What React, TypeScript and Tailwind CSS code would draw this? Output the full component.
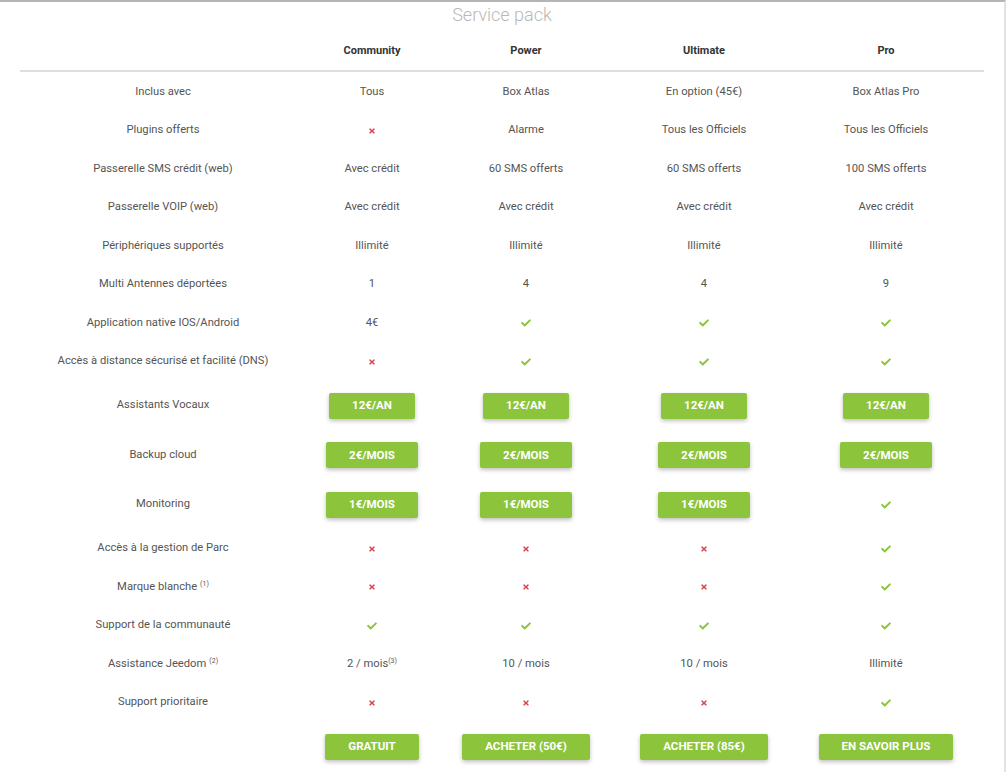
import React from "react";
import { FaCheck, FaTimes } from "react-icons/fa";

type Cell = string | { sup: string; text: string } | "yes" | "no" | { btn: string };

interface Row {
  label: string;
  labelSup?: string;
  cells: Cell[];
  tall?: boolean;
}

const plans = ["Community", "Power", "Ultimate", "Pro"];

const rows: Row[] = [
  { label: "Inclus avec", cells: ["Tous", "Box Atlas", "En option (45€)", "Box Atlas Pro"] },
  { label: "Plugins offerts", cells: ["no", "Alarme", "Tous les Officiels", "Tous les Officiels"] },
  { label: "Passerelle SMS crédit (web)", cells: ["Avec crédit", "60 SMS offerts", "60 SMS offerts", "100 SMS offerts"] },
  { label: "Passerelle VOIP (web)", cells: ["Avec crédit", "Avec crédit", "Avec crédit", "Avec crédit"] },
  { label: "Périphériques supportés", cells: ["Illimité", "Illimité", "Illimité", "Illimité"] },
  { label: "Multi Antennes déportées", cells: ["1", "4", "4", "9"] },
  { label: "Application native IOS/Android", cells: ["4€", "yes", "yes", "yes"] },
  { label: "Accès à distance sécurisé et facilité (DNS)", cells: ["no", "yes", "yes", "yes"] },
  {
    label: "Assistants Vocaux",
    tall: true,
    cells: [{ btn: "12€/AN" }, { btn: "12€/AN" }, { btn: "12€/AN" }, { btn: "12€/AN" }],
  },
  {
    label: "Backup cloud",
    tall: true,
    cells: [{ btn: "2€/MOIS" }, { btn: "2€/MOIS" }, { btn: "2€/MOIS" }, { btn: "2€/MOIS" }],
  },
  {
    label: "Monitoring",
    tall: true,
    cells: [{ btn: "1€/MOIS" }, { btn: "1€/MOIS" }, { btn: "1€/MOIS" }, "yes"],
  },
  { label: "Accès à la gestion de Parc", cells: ["no", "no", "no", "yes"] },
  { label: "Marque blanche", labelSup: "(1)", cells: ["no", "no", "no", "yes"] },
  { label: "Support de la communauté", cells: ["yes", "yes", "yes", "yes"] },
  {
    label: "Assistance Jeedom",
    labelSup: "(2)",
    cells: [{ text: "2 / mois", sup: "(3)" }, "10 / mois", "10 / mois", "Illimité"],
  },
  { label: "Support prioritaire", cells: ["no", "no", "no", "yes"] },
  {
    label: "",
    tall: true,
    cells: [{ btn: "GRATUIT" }, { btn: "ACHETER (50€)" }, { btn: "ACHETER (85€)" }, { btn: "EN SAVOIR PLUS" }],
  },
];

const GreenButton: React.FC<{ children: React.ReactNode }> = ({ children }) => (
  <span className="inline-flex h-[26px] items-center justify-center rounded-[2px] bg-[#8cc43c] px-[23px] text-[11.5px] font-bold uppercase leading-none text-white shadow-[0_2px_4px_rgba(0,0,0,0.25)]">
    {children}
  </span>
);

const renderCell = (cell: Cell) => {
  if (cell === "yes") return <FaCheck className="text-[#8cc43c]" size={10} />;
  if (cell === "no") return <FaTimes className="text-[#d9434b]" size={8} />;
  if (typeof cell === "string") return <span>{cell}</span>;
  if ("btn" in cell) return <GreenButton>{cell.btn}</GreenButton>;
  return (
    <span>
      {cell.text}
      <sup className="text-[7px]">{cell.sup}</sup>
    </span>
  );
};

export default function App() {
  return (
    <div className="min-h-[772px] w-[1006px] border-t-2 border-r-2 border-t-[#b5b5b5] border-r-[#e2e2e2] bg-white font-['Roboto',sans-serif] text-[11.2px] text-[#555]">
      <div className="flex h-[24px] items-center justify-center text-[18px] font-light text-[#b8b8b8]">
        Service pack
      </div>
      <div className="mx-[20px] grid h-[46px] grid-cols-[286px_132px_176px_180px_184px] items-center border-b-2 border-[#dedede] pt-[6px] text-[11px] font-bold text-[#333]">
        <div />
        {plans.map((p) => (
          <div key={p} className="text-center">
            {p}
          </div>
        ))}
      </div>
      <div className="mx-[20px] pt-[1px]">
        {rows.map((row, i) => (
          <div
            key={i}
            className={`grid grid-cols-[286px_132px_176px_180px_184px] items-center ${
              row.tall ? "h-[49.5px]" : "h-[38.5px]"
            }`}
          >
            <div className="text-center">
              {row.label}
              {row.labelSup && <sup className="ml-[3px] text-[7px]">{row.labelSup}</sup>}
            </div>
            {row.cells.map((c, j) => (
              <div key={j} className="flex items-center justify-center">
                {renderCell(c)}
              </div>
            ))}
          </div>
        ))}
      </div>
    </div>
  );
}
